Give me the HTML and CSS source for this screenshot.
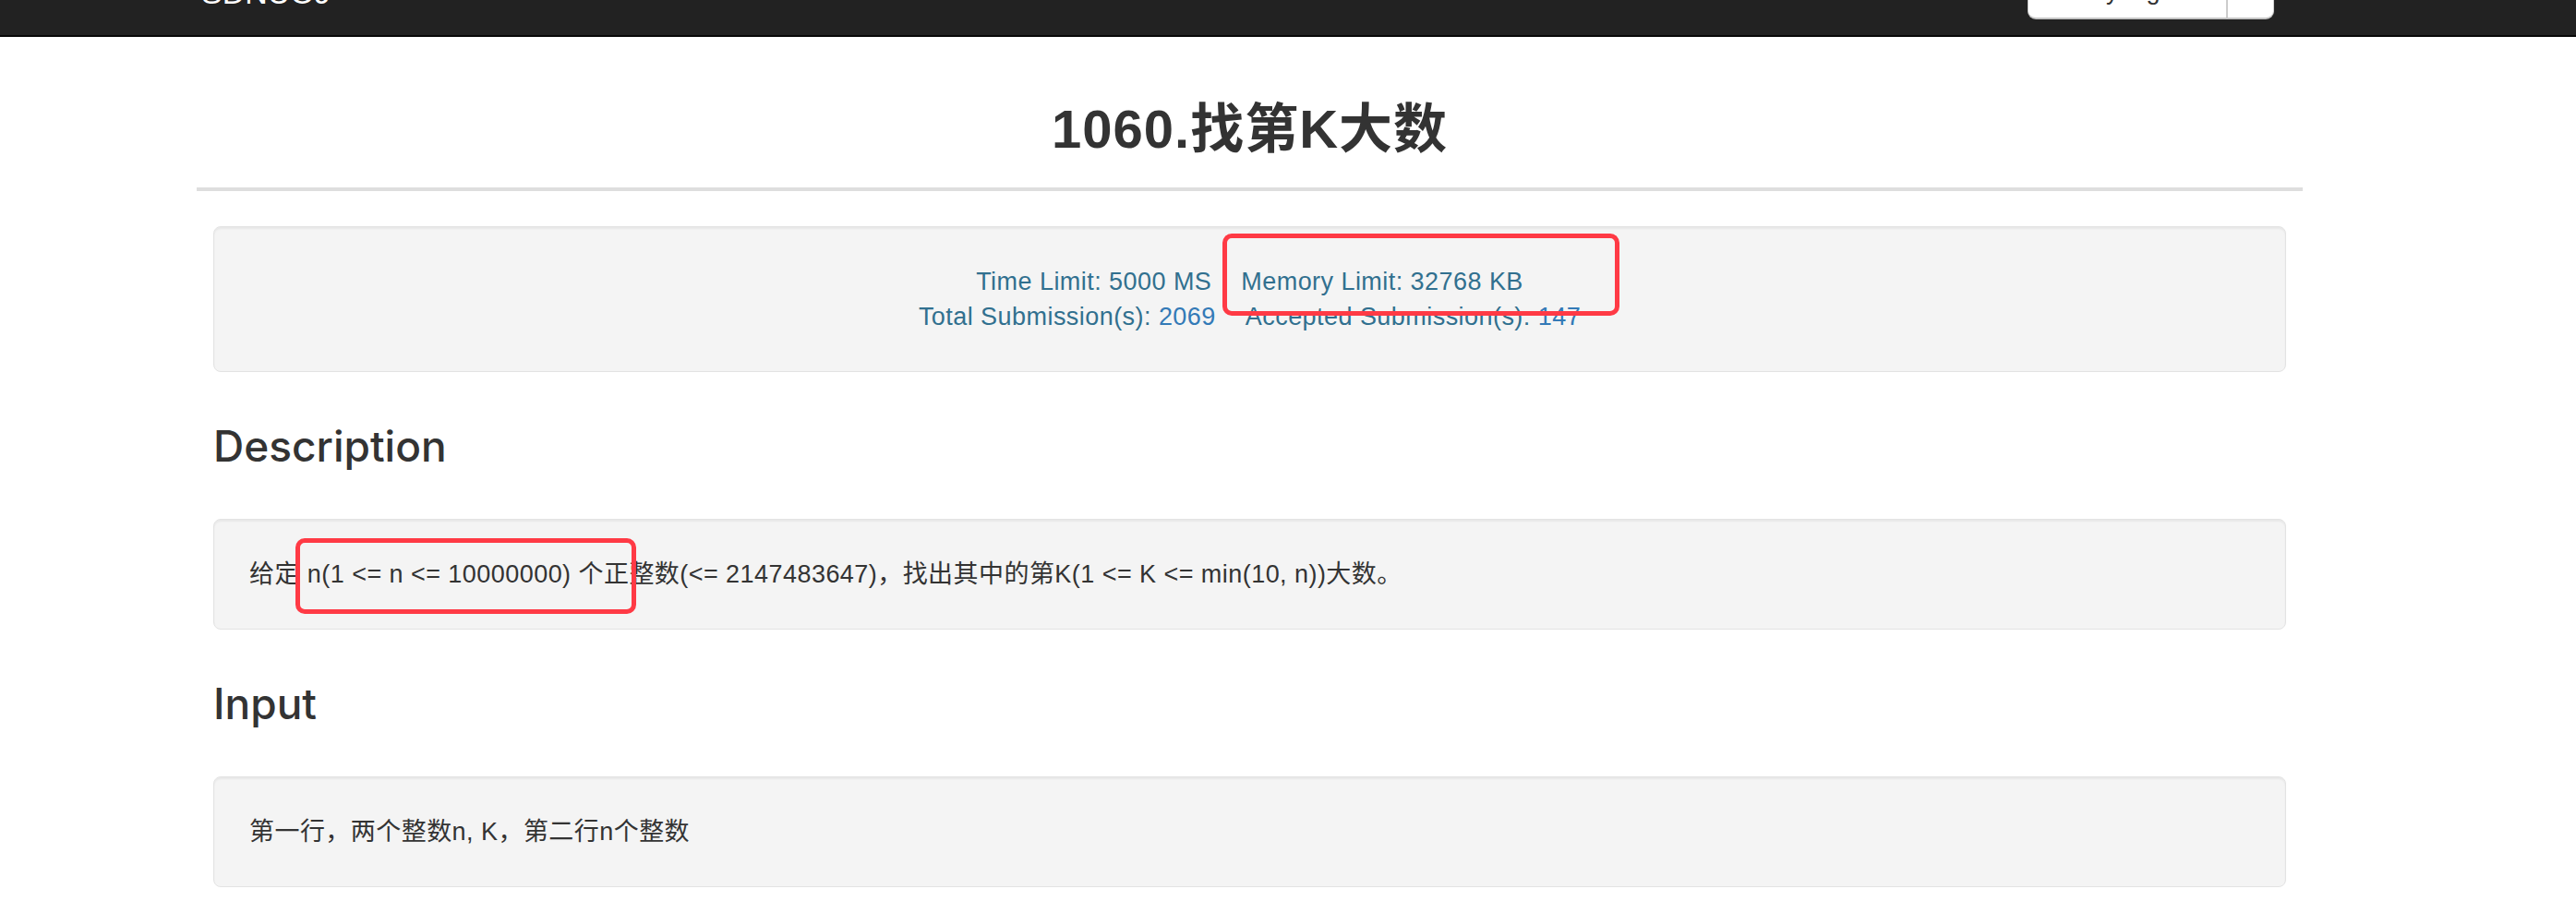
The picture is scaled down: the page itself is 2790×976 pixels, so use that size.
FILE: index.html
```html
<!DOCTYPE html>
<html lang="zh-CN">
<head>
<meta charset="utf-8">
<title>1060.找第K大数</title>
<link rel="stylesheet" href="styles.css">
</head>
<body>
<nav class="navbar">
  <div class="nav-inner">
    <span class="brand">SDNUOJ</span>
    <div class="btn-group">
      <span class="btn-main">Kyang</span>
      <span class="btn-caret"></span>
    </div>
  </div>
</nav>
<main class="page">
  <header class="page-header">
    <h1 class="title">1060.找第K大数</h1>
  </header>
  <section class="well limits">
    <div class="limit-row">
      <span class="item">Time Limit: 5000 MS</span>
      <span class="item marked">Memory Limit: 32768 KB</span>
    </div>
    <div class="limit-row">
      <span class="item">Total Submission(s): <a class="num">2069</a></span>
      <span class="item">Accepted Submission(s): <a class="num">147</a></span>
    </div>
  </section>
  <h3 class="section-title">Description</h3>
  <section class="well text-well">
    <p class="text">给定 n(1 &lt;= n &lt;= 10000000) 个正整数(&lt;= 2147483647)，找出其中的第K(1 &lt;= K &lt;= min(10, n))大数。</p>
    <span class="mark-box desc-mark"></span>
  </section>
  <h3 class="section-title">Input</h3>
  <section class="well text-well">
    <p class="text">第一行，两个整数n, K，第二行n个整数</p>
  </section>
</main>
</body>
</html>
```
FILE: styles.css
```css
* { box-sizing: border-box; }
html, body { margin: 0; padding: 0; background: #fff; }
body {
  font-family: "Liberation Sans", "Noto Sans CJK SC", sans-serif;
  font-size: 27px;
  line-height: 38px;
  letter-spacing: 0.45px;
  color: #333;
  overflow: hidden;
}
.navbar {
  height: 40px;
  background: #222;
  border-bottom: 2px solid #080808;
  overflow: hidden;
}
.nav-inner {
  margin-left: 213px;
  width: 2281px;
  display: flex;
  align-items: flex-start;
}
.brand {
  margin-left: 5px;
  margin-top: -25px;
  font-size: 34px;
  line-height: 34px;
  letter-spacing: 0;
  color: #fff;
}
.btn-group {
  margin-left: auto;
  margin-right: 31px;
  margin-top: -40px;
  height: 61px;
  display: flex;
  background: #fff;
  border: 1px solid #ccc;
  border-bottom: 2px solid #c4c4c4;
  border-radius: 9px;
  overflow: hidden;
}
.btn-main {
  width: 214px;
  padding-left: 66px;
  padding-top: 10px;
  font-size: 27px;
  line-height: 38px;
  letter-spacing: 0;
  color: #333;
}
.btn-caret {
  width: 51px;
  border-left: 2px solid #ccc;
}
.page {
  margin-left: 213px;
  width: 2281px;
}
.page-header {
  margin-top: 69px;
  padding-bottom: 32px;
  border-bottom: 4px solid #dedede;
}
.title {
  margin: 0;
  text-align: center;
  font-size: 58px;
  line-height: 62px;
  letter-spacing: 1px;
  font-weight: 700;
  color: #333;
}
.well {
  margin: 0 18px;
  background: #f4f4f4;
  border: 1px solid #e3e3e3;
  border-radius: 8px;
  box-shadow: inset 0 2px 2px rgba(0,0,0,0.05);
  padding: 40px 38px;
}
.limits { margin-top: 38px; }
.limit-row {
  display: flex;
  justify-content: center;
  gap: 32px;
  color: #31708f;
}
.item { white-space: pre; }
.num { color: #337ab7; text-decoration: none; }
.marked { position: relative; }
.marked::after {
  content: "";
  position: absolute;
  left: -20px;
  top: -33px;
  width: 420px;
  height: 79px;
  border: 5px solid #ff3a45;
  border-radius: 10px;
}
.section-title {
  margin: 55px 18px 53px;
  font-family: Inter, "Liberation Sans", sans-serif;
  font-weight: 500;
  font-size: 46px;
  line-height: 51px;
  letter-spacing: 0;
  color: #333;
}
.text-well { position: relative; }
.text { margin: 0; }
.mark-box {
  position: absolute;
  border: 5px solid #ff3a45;
  border-radius: 10px;
}
.desc-mark {
  left: 88px;
  top: 20px;
  width: 369px;
  height: 82px;
}
```
